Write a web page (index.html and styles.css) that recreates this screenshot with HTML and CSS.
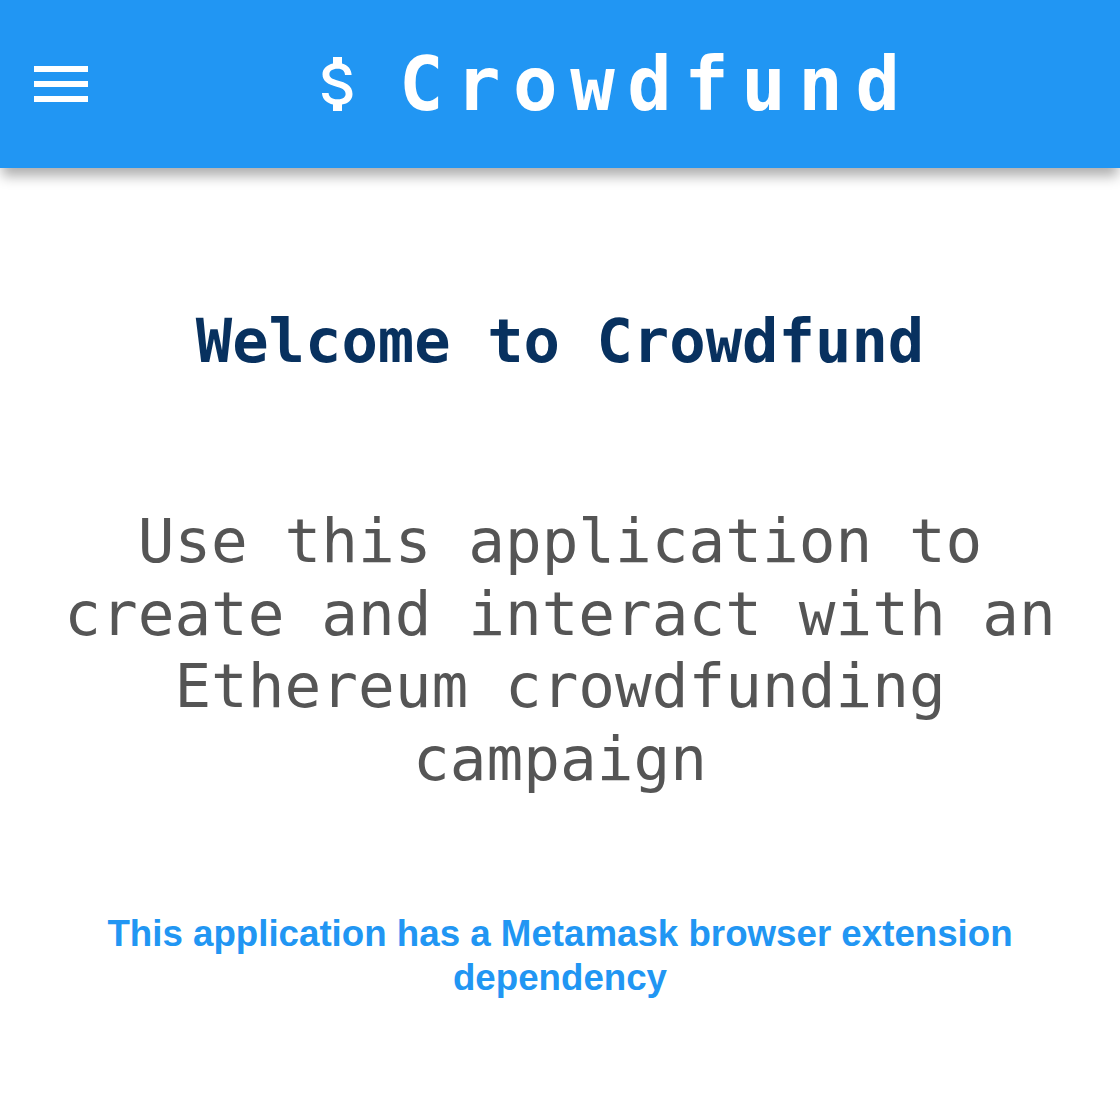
FILE: index.html
```html
<!DOCTYPE html>
<html lang="en">
<head>
<meta charset="utf-8">
<title>Crowdfund</title>
<link rel="stylesheet" href="styles.css">
</head>
<body>
<header class="app-bar">
  <button class="menu-btn" aria-label="Menu">
    <span class="bar"></span>
    <span class="bar"></span>
    <span class="bar"></span>
  </button>
  <div class="app-title">
    <svg class="money-icon" viewBox="0 0 24 24" width="72" height="72" aria-hidden="true"><path fill="#ffffff" d="M11.8 10.9c-2.27-.59-3-1.2-3-2.150 0-1.09 1.01-1.85 2.7-1.85 1.78 0 2.44.85 2.5 2.1h2.21c-.07-1.72-1.12-3.3-3.21-3.81V3h-3v2.16c-1.94.42-3.5 1.68-3.5 3.61 0 2.31 1.91 3.46 4.7 4.13 2.5.6 3 1.48 3 2.41 0 .69-.49 1.79-2.7 1.79-2.06 0-2.87-.92-2.98-2.1h-2.2c.12 2.19 1.76 3.42 3.68 3.83V21h3v-2.15c1.95-.37 3.5-1.5 3.5-3.55 0-2.84-2.43-3.810-4.7-4.4z"/></svg>
    <span class="title-text">Crowdfund</span>
  </div>
</header>
<main class="content">
  <h1 class="welcome">Welcome to Crowdfund</h1>
  <p class="intro">Use this application to create and interact with an Ethereum crowdfunding campaign</p>
  <p class="notice">This application has a Metamask browser extension dependency</p>
</main>
</body>
</html>
```

FILE: styles.css
```css
html, body {
  margin: 0;
  padding: 0;
  background: #ffffff;
}

body {
  font-family: "DejaVu Sans Mono", monospace;
}

.app-bar {
  height: 168px;
  background: #2196f3;
  display: flex;
  align-items: center;
  padding-left: 34px;
  box-shadow: 0 10px 12px -2px rgba(0, 0, 0, 0.32);
  position: relative;
  z-index: 1;
}

.menu-btn {
  background: none;
  border: 0;
  padding: 0;
  margin: 0;
  width: 54px;
  display: flex;
  flex-direction: column;
  gap: 9px;
}

.bar {
  display: block;
  width: 54px;
  height: 6px;
  background: #ffffff;
}

.app-title {
  margin-left: 215px;
  display: flex;
  align-items: center;
}

.money-icon {
  display: block;
  width: 72px;
  height: 72px;
  flex: none;
}

.title-text {
  margin-left: 24px;
  color: #ffffff;
  font-family: "DejaVu Sans Mono", monospace;
  font-weight: bold;
  font-size: 74px;
  letter-spacing: 12.5px;
  line-height: 1;
}

.content {
  max-width: 1020px;
  margin: 0 auto;
  text-align: center;
}

.welcome {
  margin: 137px 0 0;
  font-family: "DejaVu Sans Mono", monospace;
  font-weight: bold;
  font-size: 60.5px;
  line-height: 72px;
  color: #08315f;
}

.intro {
  margin: 128px 0 0;
  font-family: "DejaVu Sans Mono", monospace;
  font-size: 61px;
  line-height: 72.5px;
  color: #555555;
}

.notice {
  margin: 117px 0 0;
  font-family: "Liberation Sans", Arial, sans-serif;
  font-weight: bold;
  font-size: 36.7px;
  line-height: 44px;
  color: #2196f3;
}
```
